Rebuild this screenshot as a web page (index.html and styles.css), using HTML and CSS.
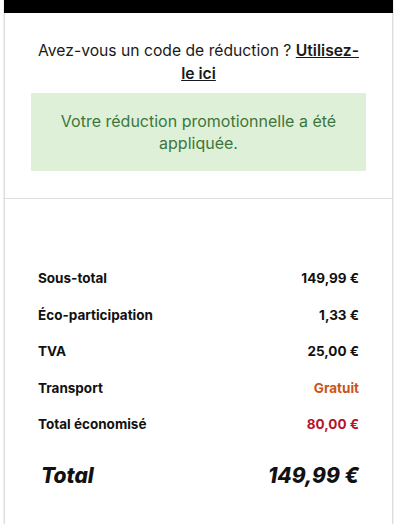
FILE: index.html
```html
<!DOCTYPE html>
<html lang="fr">
<head>
<meta charset="utf-8">
<link rel="stylesheet" href="styles.css">
</head>
<body>
<div class="card">
  <div class="topbar"></div>
  <div class="promo">
    <p class="ask">Avez-vous un code de réduction ? <a class="link" href="#">Utilisez-le ici</a></p>
    <div class="alert">Votre réduction promotionnelle a été appliquée.</div>
  </div>
  <div class="summary">
    <div class="row"><span>Sous-total</span><span>149,99 €</span></div>
    <div class="row"><span>Éco-participation</span><span>1,33 €</span></div>
    <div class="row"><span>TVA</span><span>25,00 €</span></div>
    <div class="row"><span>Transport</span><span class="free">Gratuit</span></div>
    <div class="row"><span>Total économisé</span><span class="saved">80,00 €</span></div>
    <div class="total"><span>Total</span><span>149,99 €</span></div>
  </div>
</div>
</body>
</html>
```
FILE: styles.css
```css
html, body { margin: 0; padding: 0; background: #fff; }
body { font-family: "Inter", "Liberation Sans", sans-serif; color: #111; }
.card {
  margin-left: 4px;
  width: 387px;
  height: 540px;
  border-left: 1px solid #ddd;
  border-right: 1px solid #ddd;
  box-shadow: -1px 0 0 #f0f0f0, 1px 0 0 #f0f0f0;
}
.topbar { height: 13px; background: #000; margin: 0 -1px; }
.promo {
  padding: 26px 26px 26px;
  border-bottom: 1px solid #ddd;
  height: 133px;
}
.ask {
  margin: 0;
  text-align: center;
  font-size: 15.7px;
  line-height: 23px;
  padding: 0 4px;
  color: #1a1a1a;
}
.link { color: #1a1a1a; font-weight: 600; text-decoration: underline; }
.alert {
  margin-top: 8px;
  background: #dff0d8;
  color: #3c763d;
  text-align: center;
  font-size: 16px;
  line-height: 22px;
  padding: 17px 20px;
}
.summary { padding: 68px 33px 0 33px; }
.row {
  display: flex;
  justify-content: space-between;
  font-size: 13.5px;
  font-weight: 700;
  height: 36.5px;
  line-height: 23px;
}
.free { color: #c8561a; }
.saved { color: #b5132c; }
.total {
  display: flex;
  justify-content: space-between;
  font-style: italic;
  font-weight: 800;
  font-size: 21px;
  margin-top: 13px;
  padding-left: 3px;
}
```
